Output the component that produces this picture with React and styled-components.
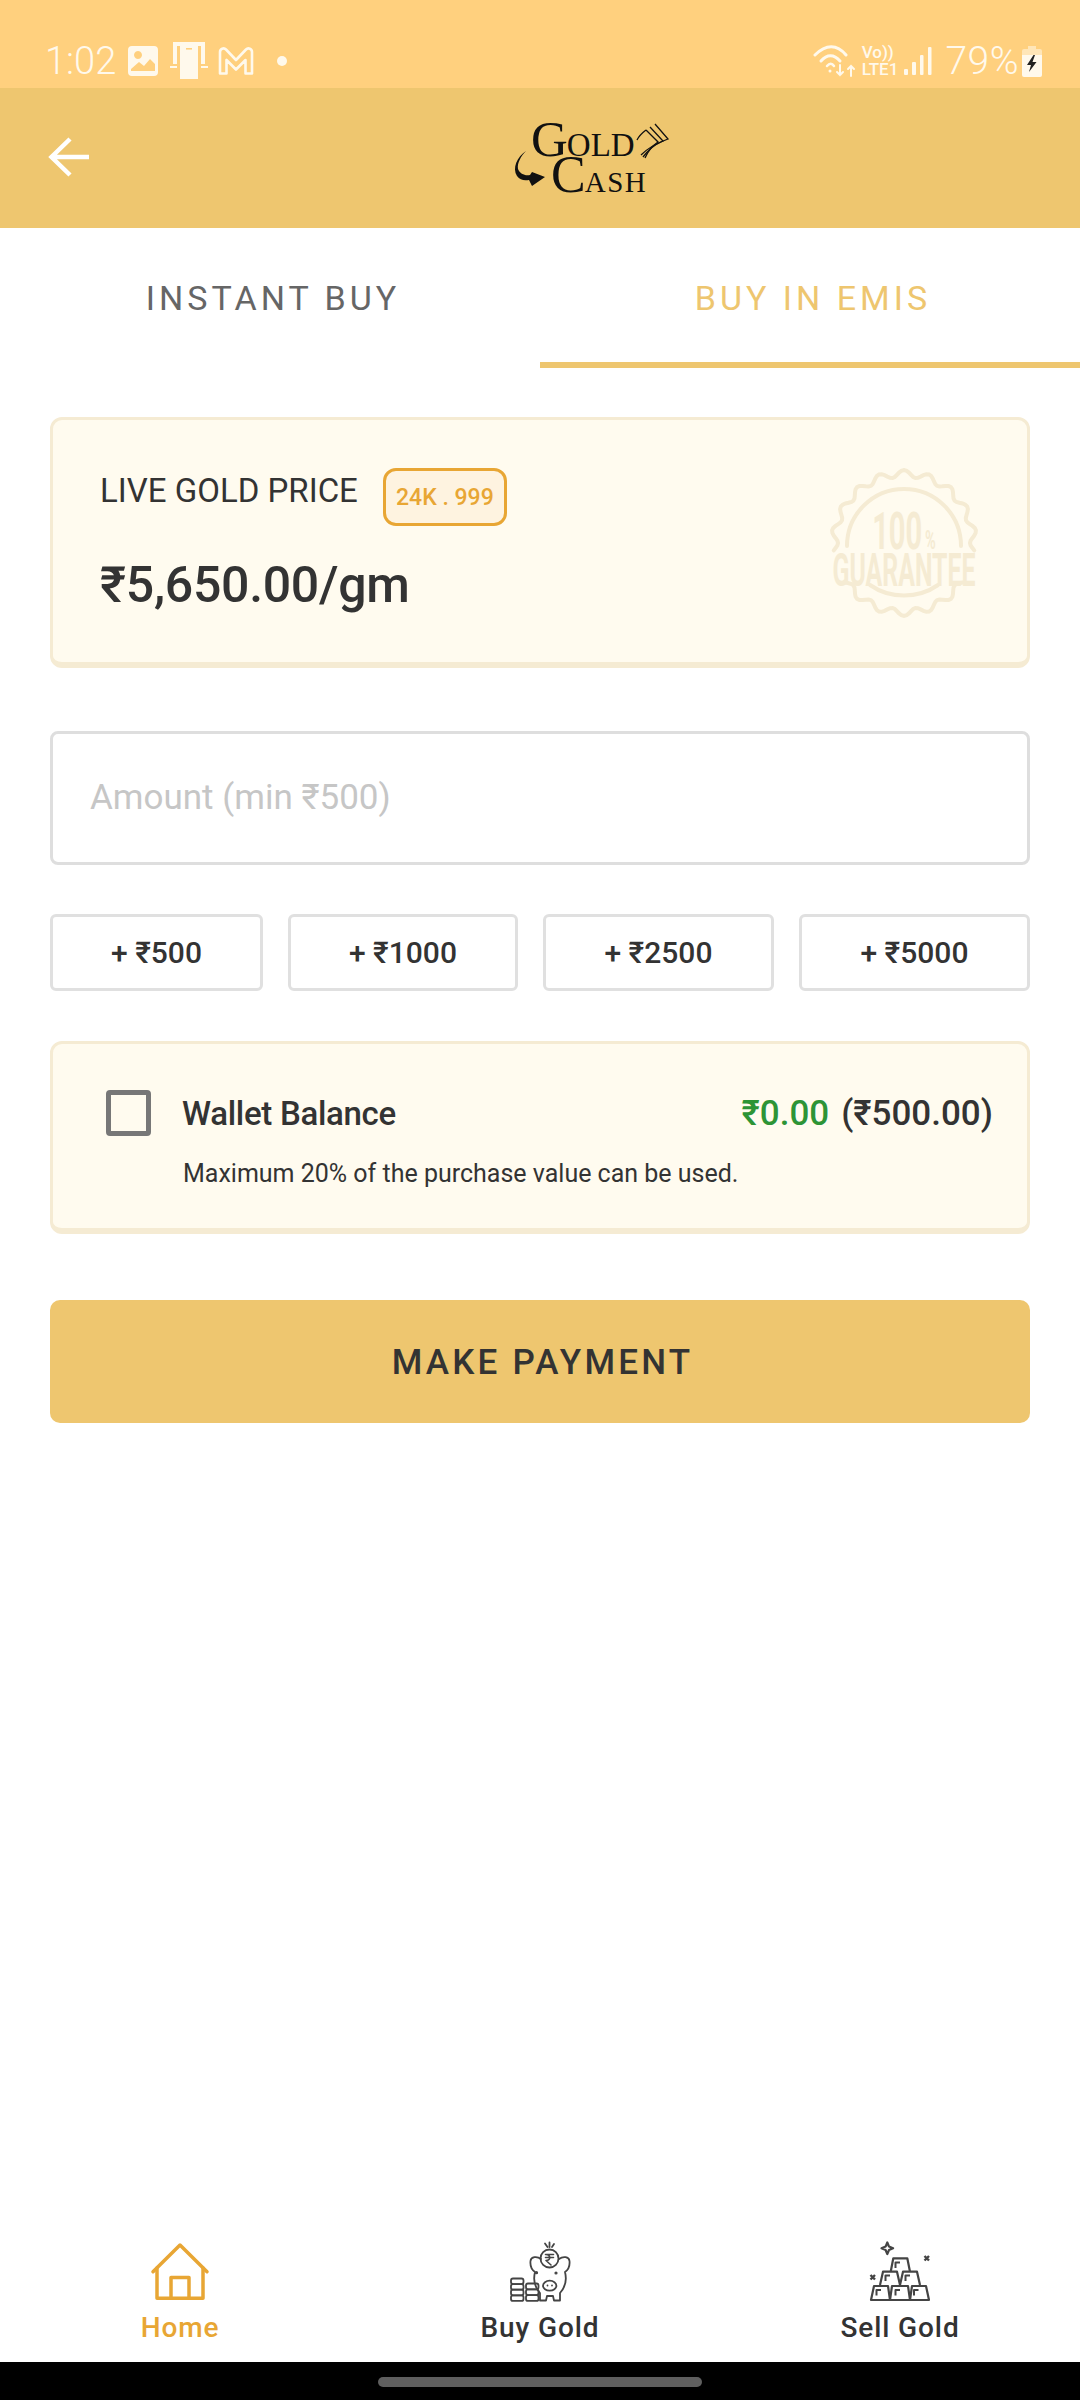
import React from 'react';
import styled, { createGlobalStyle } from 'styled-components';

const GlobalStyle = createGlobalStyle`
  html, body {
    margin: 0;
    padding: 0;
    background: #fff;
    font-family: Roboto, "Noto Sans", sans-serif;
  }
  * { box-sizing: border-box; }
`;

const Screen = styled.div`
  width: 1080px;
  height: 2400px;
  display: flex;
  flex-direction: column;
  background: #fff;
  color: #333;
  overflow: hidden;
`;

const StatusBar = styled.div`
  height: 88px;
  flex: none;
  background: #ffd07e;
  padding: 33px 38px 0 45px;
  display: flex;
  justify-content: space-between;
  align-items: flex-start;
  color: #fff9ec;
`;
const StatusGroup = styled.div`
  display: flex;
  align-items: center;
  height: 56px;
`;
const Clock = styled.span`
  font-size: 38px;
  font-weight: 300;
  width: 76px;
`;
const Battery = styled.span`
  font-size: 39px;
  font-weight: 300;
  letter-spacing: 0.5px;
  margin: 0 3px 0 13px;
`;
const Network = styled.div`
  display: flex;
  flex-direction: column;
  align-items: flex-start;
  font-size: 17px;
  font-weight: 500;
  line-height: 17px;
  margin: 0 6px 0 3px;
`;

const Header = styled.header`
  height: 140px;
  flex: none;
  background: #eec66f;
  display: flex;
  align-items: center;
  position: relative;
  padding: 0 0 2px 48px;
`;
const Logo = styled.div`
  position: absolute;
  left: 512px;
  top: 32px;
  width: 160px;
  height: 72px;
  font-family: "Liberation Serif", serif;
  color: #111;
`;
const LogoLine = styled.div`
  position: absolute;
  left: ${(p) => p.$left}px;
  top: ${(p) => p.$top}px;
  line-height: 0.7;
  font-size: ${(p) => p.$size}px;
  letter-spacing: ${(p) => p.$spacing}px;
  white-space: nowrap;
  span {
    font-size: ${(p) => p.$cap}px;
    letter-spacing: -1px;
  }
`;
const LogoMark = styled.svg`
  position: absolute;
  left: 0;
  top: 0;
`;

const Tabs = styled.nav`
  height: 140px;
  flex: none;
  display: flex;
`;
const Tab = styled.div`
  flex: 1;
  display: flex;
  align-items: center;
  justify-content: center;
  font-size: 34px;
  letter-spacing: 4px;
  padding: 6px 0 0 6px;
  color: ${(p) => (p.$active ? '#eec66f' : '#666')};
  border-bottom: 6px solid ${(p) => (p.$active ? '#eec66f' : 'transparent')};
`;

const Content = styled.main`
  flex: 1;
  padding: 49px 50px 0;
  display: flex;
  flex-direction: column;
`;

const Card = styled.section`
  position: relative;
  background: #fffbef;
  border: 3px solid #f5ebd3;
  border-bottom-width: 6px;
  border-radius: 12px;
`;
const PriceCard = styled(Card)`
  height: 251px;
  padding: 48px 47px 0;
`;
const PriceTop = styled.div`
  display: flex;
  align-items: flex-start;
  gap: 25px;
`;
const PriceLabel = styled.div`
  font-size: 33px;
  line-height: 44px;
  margin-top: 1px;
`;
const Purity = styled.div`
  width: 124px;
  height: 58px;
  border: 3px solid #e8a634;
  border-radius: 13px;
  background: #fef3e0;
  color: #e8a634;
  font-size: 23px;
  font-weight: 500;
  display: flex;
  align-items: center;
  justify-content: center;
`;
const Price = styled.div`
  font-size: 50px;
  font-weight: 500;
  line-height: 60px;
  margin-top: 29px;
  letter-spacing: -0.3px;
`;

const Seal = styled.div`
  position: absolute;
  left: 775px;
  top: 48px;
  width: 152px;
  height: 152px;
  color: #f5ebd3;
  font-weight: 700;
  svg {
    position: absolute;
    left: 0;
    top: 0;
  }
`;
const SealText = styled.div`
  position: absolute;
  left: 0;
  width: 100%;
  display: flex;
  justify-content: center;
  align-items: baseline;
  top: ${(p) => p.$top}px;
  height: ${(p) => p.$height}px;
  font-size: ${(p) => p.$size}px;
  line-height: ${(p) => p.$height}px;
  white-space: nowrap;
  transform: scaleX(${(p) => p.$squeeze});
  small {
    font-size: 50%;
    margin-left: 5px;
  }
`;

const AmountInput = styled.input`
  display: block;
  margin-top: 63px;
  height: 134px;
  width: 100%;
  padding: 0 37px 2px;
  border: 3px solid #dedede;
  border-radius: 8px;
  background: #fff;
  font-family: Roboto, sans-serif;
  font-size: 35px;
  outline: none;
  &::placeholder {
    color: #c6c6c6;
    opacity: 1;
  }
`;

const QuickRow = styled.div`
  margin-top: 49px;
  display: flex;
  gap: 25px;
`;
const QuickButton = styled.button`
  width: ${(p) => p.$w}px;
  height: 77px;
  flex: none;
  border: 3px solid #e0e0e0;
  border-radius: 6px;
  background: #fff;
  color: #333;
  font-family: Roboto, sans-serif;
  font-size: 30px;
  font-weight: 500;
  padding: 0;
`;

const WalletCard = styled(Card)`
  margin-top: 50px;
  height: 193px;
  padding: 46px 34px 0 53px;
`;
const WalletRow = styled.div`
  display: flex;
  align-items: center;
`;
const CheckBox = styled.div`
  width: 45px;
  height: 46px;
  border: 5px solid #777;
  border-radius: 4px;
  flex: none;
`;
const WalletTitle = styled.div`
  font-size: 33px;
  font-weight: 500;
  margin-left: 31px;
  letter-spacing: -0.3px;
  flex: 1;
`;
const WalletAmount = styled.div`
  font-size: 35px;
  font-weight: 500;
  display: flex;
  gap: 12px;
`;
const Green = styled.span`
  color: #2d9436;
`;
const WalletNote = styled.div`
  font-size: 25px;
  margin: 23px 0 0 77px;
  color: #333;
`;

const PayButton = styled.button`
  margin-top: 66px;
  height: 123px;
  width: 100%;
  flex: none;
  border: none;
  border-radius: 10px;
  background: #eec66f;
  color: #333;
  font-family: Roboto, sans-serif;
  font-size: 35px;
  font-weight: 500;
  letter-spacing: 3.2px;
  padding: 2px 0 0 5px;
`;

const BottomNav = styled.nav`
  height: 132px;
  flex: none;
  display: flex;
  background: #fff;
`;
const NavItem = styled.div`
  flex: 1;
  display: flex;
  flex-direction: column;
  align-items: center;
  color: ${(p) => (p.$active ? '#e8a634' : '#333')};
  font-size: 28px;
  font-weight: 500;
  letter-spacing: 0.9px;
  span {
    line-height: 34px;
    margin-top: 1px;
  }
`;
const NavIcon = styled.svg`
  display: block;
  flex: none;
`;

const SystemBar = styled.div`
  height: 38px;
  flex: none;
  background: #000;
  display: flex;
  justify-content: center;
  padding-top: 15px;
`;
const HomePill = styled.div`
  width: 324px;
  height: 10px;
  border-radius: 5px;
  background: #5f5f5f;
`;

// wavy ring of the seal, from angle a to angle b (degrees)
const wave = (a, b) => {
  const pts = [];
  for (let t = a; t <= b; t += 2) {
    const rad = (t * Math.PI) / 180;
    const r = 69.5 + 3.5 * Math.cos(rad * 18 + Math.PI);
    pts.push(`${(76 + r * Math.cos(rad)).toFixed(1)},${(75 + r * Math.sin(rad)).toFixed(1)}`);
  }
  return pts.join(' ');
};

const GalleryIcon = () => (
  <svg width="30" height="30" viewBox="0 0 30 30" style={{ marginLeft: 7 }}>
    <path fill="#fff9ec" fillRule="evenodd" d="M4 0h22a4 4 0 0 1 4 4v22a4 4 0 0 1-4 4H4a4 4 0 0 1-4-4V4a4 4 0 0 1 4-4ZM3 25h24v-7l-5-5-6 7-5-4-8 7ZM10 5a4 4 0 1 0 .01 0Z" />
  </svg>
);

const CastIcon = () => (
  <svg width="38" height="38" viewBox="0 0 38 38" style={{ marginLeft: 12 }}>
    <path fill="#fff9ec" d="M3 0h32v22H31V4H7v18H3ZM0 24h7v2H0ZM31 24h7v2h-7Z" />
    <path fill="#fff9ec" d="M10 3h18v34H10Z" />
    <path fill="#ffd07e" d="M16 6h6v1.600h-6Z" />
  </svg>
);

const GmailIcon = () => (
  <svg width="36" height="28" viewBox="0 0 35 28" fill="none" stroke="#fff9ec" strokeWidth="2.600" style={{ marginLeft: 10 }}>
    <path d="M1.500 5a3.500 3.500 0 0 1 6-2.500L17.500 13l10-10.500a3.500 3.500 0 0 1 6 2.500v21.500h-6.500V13l-9.500 9.500L8 13v13.500H1.500Z" strokeLinejoin="round" />
  </svg>
);

const WifiIcon = () => (
  <svg width="46" height="34" viewBox="0 0 46 34" fill="none" stroke="#fff9ec" strokeLinecap="round">
    <path d="M2 11C13 0 24 0 33 11" strokeWidth="3" />
    <path d="M8 17c6-7 13-7 19 0" strokeWidth="3" />
    <path d="M14 22c2.500-3 5-3 7 0" strokeWidth="2.500" />
    <circle cx="17" cy="27" r="1.500" fill="#fff9ec" stroke="none" />
    <path d="M27 21v10m-3-3 3 3 3-3" strokeWidth="2" />
    <path d="M38 32V22m-3 3 3-3 3 3" strokeWidth="2" />
  </svg>
);

const SignalIcon = () => (
  <svg width="28" height="28" viewBox="0 0 28 28" fill="#fff9ec">
    <rect x="0" y="22" width="4" height="6" rx="1" />
    <rect x="8" y="15" width="4" height="13" rx="1" />
    <rect x="16" y="8" width="3.500" height="20" rx="1" />
    <rect x="24" y="0" width="3.500" height="28" rx="1" />
  </svg>
);

const BatteryIcon = () => (
  <svg width="20" height="31" viewBox="0 0 20 31">
    <path fill="#ffe6b8" d="M6 0h8v3h4a2 2 0 0 1 2 2v6H0V5a2 2 0 0 1 2-2h4Z" />
    <path fill="#fff9ec" d="M0 9h20v20a2 2 0 0 1-2 2H2a2 2 0 0 1-2-2Z" />
    <path fill="#222" d="M11.500 9 5 19h4l-2 7 7.500-10h-4l2.500-7Z" />
  </svg>
);

const HomeIcon = () => (
  <NavIcon width="140" height="80" viewBox="0 0 140 80" fill="none" stroke="#e8a634" strokeWidth="3.500" strokeLinejoin="round" strokeLinecap="round">
    <path d="M43 41.700 70 15l27 26.700" />
    <path d="M47 38v30.300h46V38" />
    <path d="M61 68V47.500h18V68" />
  </NavIcon>
);

const PiggyIcon = () => (
  <NavIcon width="140" height="80" viewBox="0 0 140 80" fill="none" stroke="#444" strokeWidth="1.800" strokeLinejoin="round" strokeLinecap="round">
    <circle cx="79.500" cy="28.500" r="9" />
    <path d="M75.500 24.500h8M75.500 27.500h8M76 24.500c4.500 0 5.500 5.500 0 6l5 4.500" strokeWidth="1.600" />
    <path d="M75 13.500l2.500 3.500M79.500 12.500V17M84 14l-2 3" />
    <path d="M71 29c-4-3-10-2.500-10.500 2-.5 5 1.500 9 4.500 11-2 8-.5 15 5 21v7.500h6l1-4.500h6l1 4.500h6V63c5.500-6 7-13 5-21 3-2 5-6 4.500-11-.5-4.500-6.500-5-10.500-2" />
    <ellipse cx="79.700" cy="55.700" rx="6.700" ry="5" />
    <circle cx="66.500" cy="42.700" r="0.700" fill="#444" />
    <circle cx="86" cy="43" r="0.700" fill="#444" />
    <path d="M77.500 55.500v.1M82 55.500v.1" />
    <rect x="41" y="48.500" width="12.500" height="5.600" rx="2" />
    <rect x="41" y="54.100" width="12.500" height="5.600" rx="2" />
    <rect x="41" y="59.700" width="12.500" height="5.600" rx="2" />
    <rect x="41" y="65.300" width="12.500" height="5.600" rx="2" />
    <rect x="56" y="53.500" width="12.500" height="5.800" rx="2" />
    <rect x="56" y="59.300" width="12.500" height="5.800" rx="2" />
    <rect x="56" y="65.100" width="12.500" height="5.800" rx="2" />
  </NavIcon>
);

const GoldIcon = () => (
  <NavIcon width="140" height="80" viewBox="0 0 140 80" fill="none" stroke="#444" strokeWidth="2.200" strokeLinejoin="round">
    <path d="M60.700 41.700l2.600-13.400h14l2.700 13.400" />
    <path d="M50 55l3-13.300h14L70 55l3-13.300h14L90 55" />
    <path d="M41 70l3-14h14l2 14 2-14h16l2 14 2-14h14l3 14Z" />
    <path d="M65.500 38v-5.500h4.500M55.500 51v-5.500H60M75.500 51v-5.500H80M46.500 65.500V60H51M65.500 65.500V60H70M84 65.500V60h4.500" strokeWidth="2" />
    <path d="M57.300 12.500l1.700 4.100 4.100 1.700-4.100 1.700-1.700 4.100-1.700-4.100-4.100-1.700 4.100-1.700Z" />
    <path d="M94.500 26l4.500 4.500M99 26l-4.500 4.500M40.500 45l4.500 4.500M45 45l-4.500 4.500" strokeWidth="2.400" />
  </NavIcon>
);

const quick = [
  { label: '+ ₹500', w: 213 },
  { label: '+ ₹1000', w: 230 },
  { label: '+ ₹2500', w: 231 },
  { label: '+ ₹5000', w: 231 },
];

const App = () => (
  <Screen>
    <GlobalStyle />
    <StatusBar>
      <StatusGroup>
        <Clock>1:02</Clock>
        <GalleryIcon />
        <CastIcon />
        <GmailIcon />
        <svg width="10" height="10" viewBox="0 0 10 10" style={{ marginLeft: 23 }}>
          <circle cx="5" cy="5" r="5" fill="#fff9ec" />
        </svg>
      </StatusGroup>
      <StatusGroup>
        <WifiIcon />
        <Network>
          <span>Vo))</span>
          <span>LTE1</span>
        </Network>
        <SignalIcon />
        <Battery>79%</Battery>
        <BatteryIcon />
      </StatusGroup>
    </StatusBar>

    <Header>
      <svg width="42" height="40" viewBox="0 0 42 40" fill="none" stroke="#fff" strokeWidth="4.500">
        <path d="M41 20H4M22 2 3.500 20 22 38" />
      </svg>
      <Logo>
        <LogoMark width="160" height="72" viewBox="0 0 160 72" fill="#111">
          <path d="M14 31C5 37 0 48 5 56c3 4 7 5 12 4l3 6 13-9-13-5-2 3c-5 1-10-1-12-6-1-6 3-13 8-18Z" />
          <g fill="none" stroke="#111" strokeWidth="1.300">
            <path d="M143 4l13 15c-11 4-20 9-27 16" />
            <path d="M138 7l13 14c-9 4-15 9-20 16" />
            <path d="M134 10l12 12c-6 4-10 9-13 16" />
            <path d="M134 10c-4 3-7 6-9 10" />
          </g>
        </LogoMark>
        <LogoLine $left={19} $top={2} $size={33} $cap={51} $spacing={0}><span>G</span>OLD</LogoLine>
        <LogoLine $left={39} $top={37} $size={29} $cap={52} $spacing={1.500}><span>C</span>ASH</LogoLine>
      </Logo>
    </Header>

    <Tabs>
      <Tab>INSTANT BUY</Tab>
      <Tab $active>BUY IN EMIS</Tab>
    </Tabs>

    <Content>
      <PriceCard>
        <PriceTop>
          <PriceLabel>LIVE GOLD PRICE</PriceLabel>
          <Purity>24K . 999</Purity>
        </PriceTop>
        <Price>₹5,650.00/gm</Price>
        <Seal>
          <svg width="152" height="152" viewBox="0 0 152 152" fill="none" stroke="#f5ebd3" strokeWidth="4" strokeLinecap="round">
            <polyline points={wave(-186, 6)} />
            <polyline points={wave(34, 146)} />
            <path d="M19 78a57 57 0 1 1 114 0" />
            <path d="M42 117c20 14 48 14 68 0" />
          </svg>
          <SealText $top={44} $height={40} $size={52} $squeeze={0.56}>100<small>%</small></SealText>
          <SealText $top={84} $height={36} $size={46} $squeeze={0.54}>GUARANTEE</SealText>
        </Seal>
      </PriceCard>

      <AmountInput placeholder="Amount (min ₹500)" />

      <QuickRow>
        {quick.map((q) => (
          <QuickButton key={q.label} $w={q.w}>{q.label}</QuickButton>
        ))}
      </QuickRow>

      <WalletCard>
        <WalletRow>
          <CheckBox />
          <WalletTitle>Wallet Balance</WalletTitle>
          <WalletAmount><Green>₹0.00</Green><span>(₹500.00)</span></WalletAmount>
        </WalletRow>
        <WalletNote>Maximum 20% of the purchase value can be used.</WalletNote>
      </WalletCard>

      <PayButton>MAKE PAYMENT</PayButton>
    </Content>

    <BottomNav>
      <NavItem $active><HomeIcon /><span>Home</span></NavItem>
      <NavItem><PiggyIcon /><span>Buy Gold</span></NavItem>
      <NavItem><GoldIcon /><span>Sell Gold</span></NavItem>
    </BottomNav>
    <SystemBar><HomePill /></SystemBar>
  </Screen>
);

export default App;
